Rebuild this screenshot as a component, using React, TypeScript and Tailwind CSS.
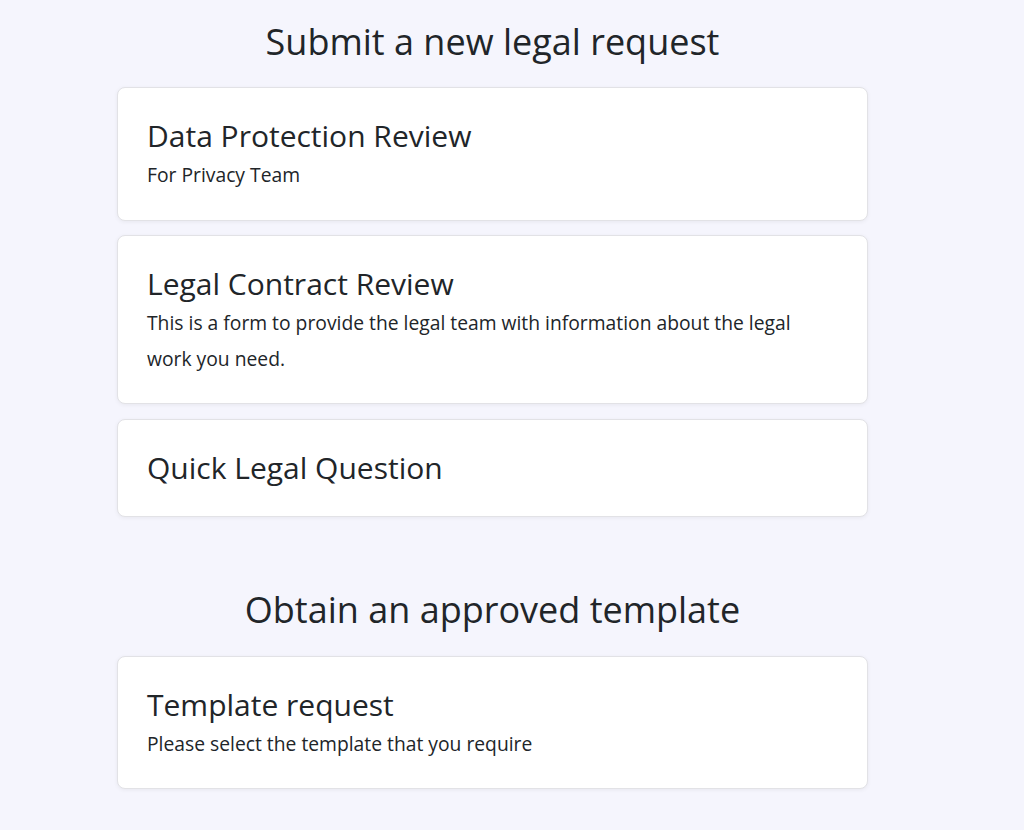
const requestForms = [
  {
    title: "Data Protection Review",
    description: "For Privacy Team",
  },
  {
    title: "Legal Contract Review",
    description:
      "This is a form to provide the legal team with information about the legal work you need.",
  },
  {
    title: "Quick Legal Question",
  },
];

const templateForms = [
  {
    title: "Template request",
    description: "Please select the template that you require",
  },
];

type FormItem = { title: string; description?: string };

const FormCard = ({ form }: { form: FormItem }) => {
  return (
    <div className="bg-white border border-[#e2e2e6] rounded-lg shadow-[0_1px_4px_rgba(0,0,0,0.06)] pl-[29px] pr-[40px] py-[27px]">
      <h3 className="text-[30px] leading-[42px] text-[#212529]">{form.title}</h3>
      {form.description && (
        <p className="text-[19.3px] leading-[35.5px] text-[#212529]">
          {form.description}
        </p>
      )}
    </div>
  );
};

const App = () => {
  return (
    <div className="min-h-[830px] bg-[#f5f5fd] font-['Open_Sans',sans-serif] pl-[117px] pr-[156px]">
      <section className="pt-[14px]">
        <h2 className="text-center text-[36px] leading-[56px] text-[#212529] mb-[17px]">
          Submit a new legal request
        </h2>
        <div className="flex flex-col gap-[14.5px]">
          {requestForms.map((form) => (
            <FormCard key={form.title} form={form} />
          ))}
        </div>
      </section>

      <section className="pt-[65px]">
        <h2 className="text-center text-[36px] leading-[56px] text-[#212529] mb-[18px]">
          Obtain an approved template
        </h2>
        <div className="flex flex-col gap-[14.5px]">
          {templateForms.map((form) => (
            <FormCard key={form.title} form={form} />
          ))}
        </div>
      </section>
    </div>
  );
};

export default App;
